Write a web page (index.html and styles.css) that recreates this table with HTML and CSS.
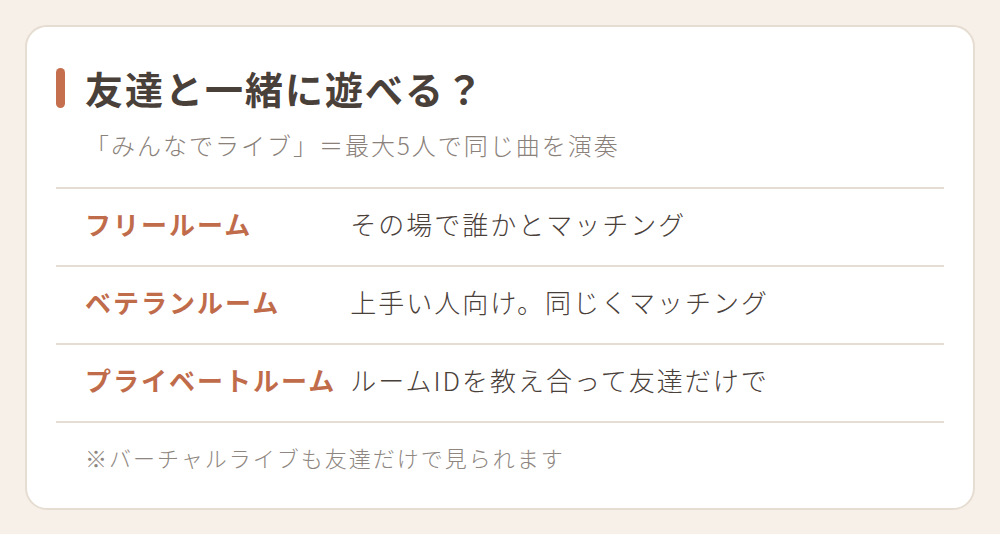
FILE: index.html
```html
<!DOCTYPE html>
<html lang="ja">
<head>
    <meta charset="UTF-8">
    <title>友達と一緒に遊べる？</title>
    <link rel="stylesheet" href="styles.css">
</head>
<body>
    <div class="card">
        <h1 class="card-title">友達と一緒に遊べる？</h1>
        <p class="card-sub">「みんなでライブ」＝最大5人で同じ曲を演奏</p>
        <table class="room-table">
            <tr>
                <th>フリールーム</th>
                <td>その場で誰かとマッチング</td>
            </tr>
            <tr>
                <th>ベテランルーム</th>
                <td>上手い人向け。同じくマッチング</td>
            </tr>
            <tr>
                <th>プライベートルーム</th>
                <td>ルームIDを教え合って友達だけで</td>
            </tr>
        </table>
        <p class="card-note">※バーチャルライブも友達だけで見られます</p>
    </div>
</body>
</html>
```

FILE: styles.css
```css
body {
    margin: 0;
    padding: 25px;
    background-color: #f7f0e8; /* warm paper */
    font-family: "Noto Sans CJK JP", "Noto Sans", sans-serif;
    color: #4a403a;
}
.card {
    background-color: #fff;
    border: 2px solid #e6ddd2;
    border-radius: 22px;
    padding: 34px 29px;
    height: 485px;
    box-sizing: border-box;
}
.card-title {
    display: flex;
    align-items: center;
    gap: 20px;
    margin: 0;
    font-size: 38px;
    font-weight: 700;
    letter-spacing: 2px;
    line-height: 54px;
}
.card-title::before {
    content: "";
    width: 9px;
    height: 40px;
    border-radius: 5px;
    background-color: #c56f4e; /* accent bar */
}
.card-sub {
    margin: 12px 0 0 0;
    padding-left: 29px;
    font-size: 24px;
    font-weight: 300;
    line-height: 36px;
    letter-spacing: 2px;
    color: #8a817a;
}
.room-table {
    width: 100%;
    border-collapse: collapse;
    margin-top: 24px;
}
.room-table th,
.room-table td {
    border-top: 2px solid #e4ddd4;
    border-bottom: 2px solid #e4ddd4;
    height: 68px;
    padding: 0 0 8px 0;
    font-size: 26px;
    letter-spacing: 2px;
    text-align: left;
    white-space: nowrap;
}
.room-table th {
    width: 1%;
    padding: 0 14px 8px 29px;
    color: #c06c4b;
    font-weight: 700;
}
.room-table td {
    font-weight: 300;
    color: #4a403a;
}
.card-note {
    margin: 18px 0 0 0;
    padding-left: 29px;
    font-size: 22px;
    font-weight: 300;
    letter-spacing: 2px;
    color: #8e8680;
}
```
